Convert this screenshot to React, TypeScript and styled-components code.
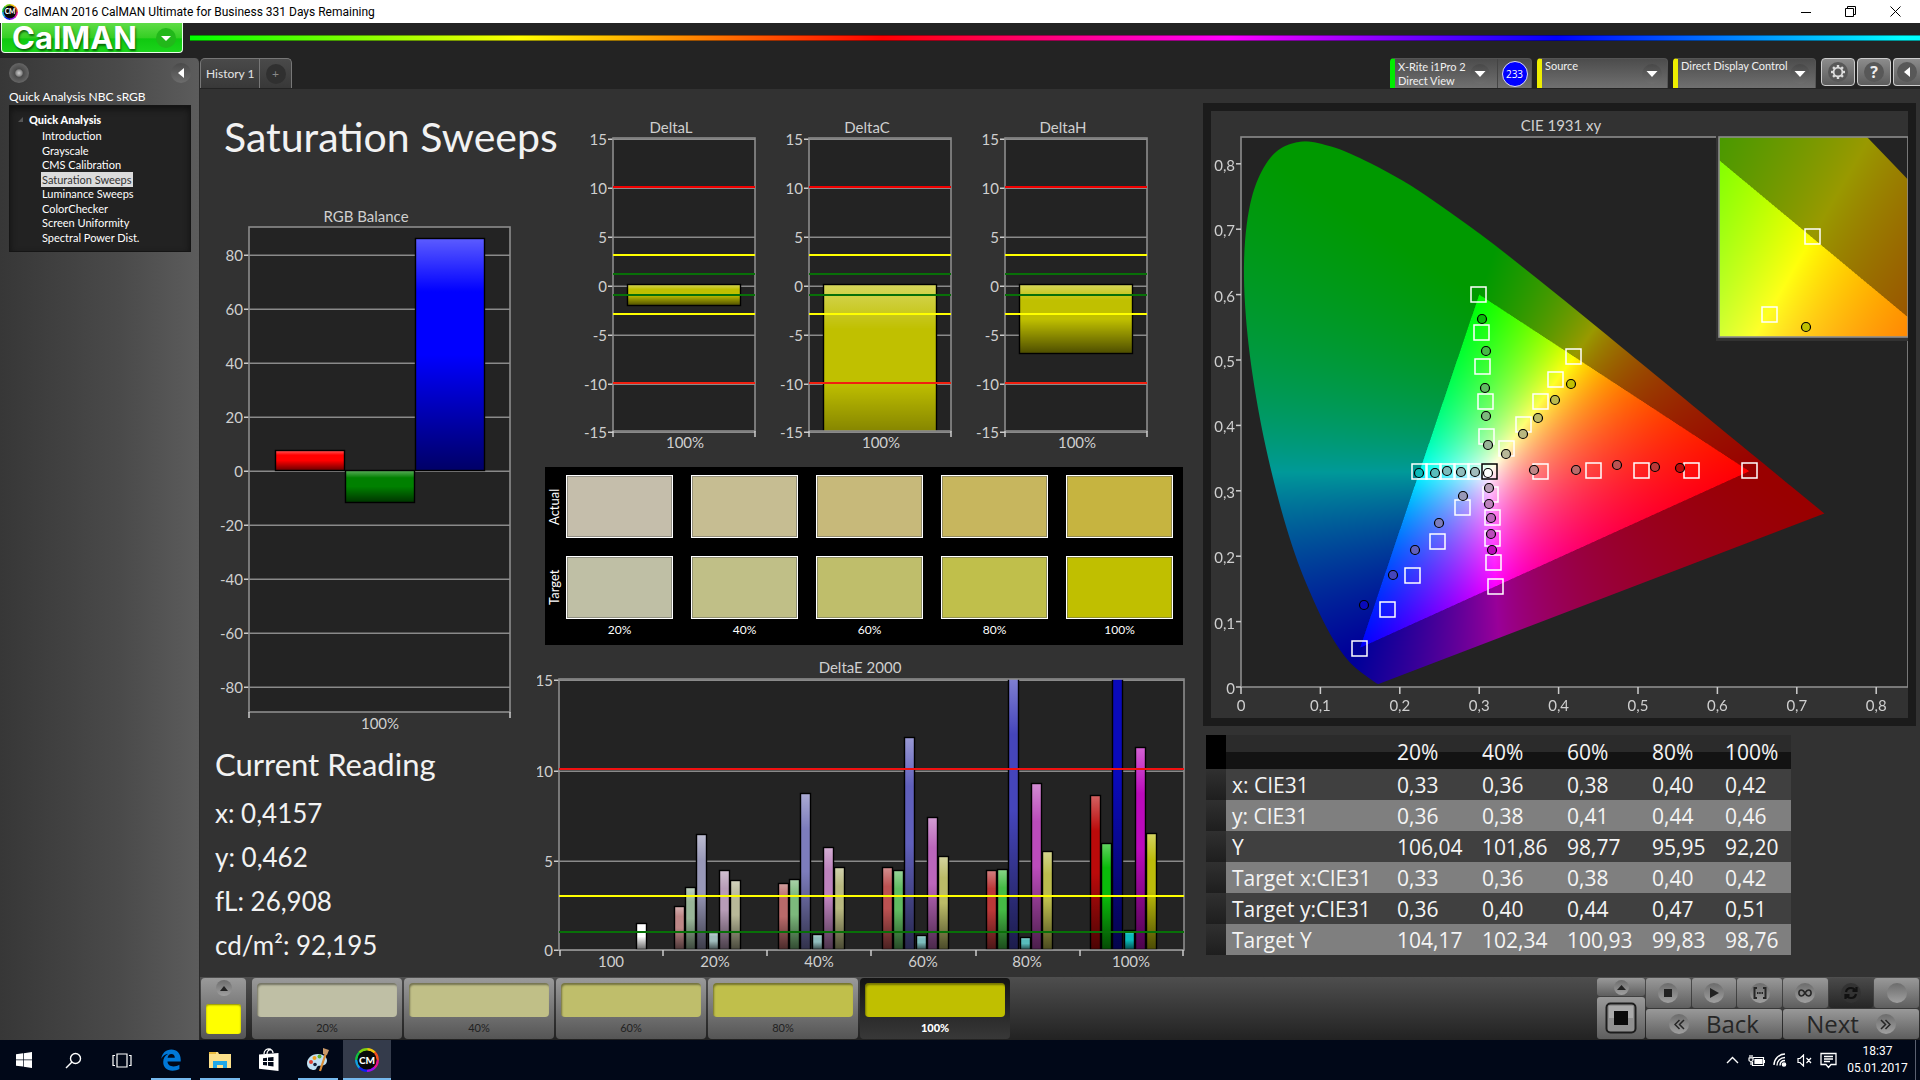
import React, { useEffect, useRef } from "react";
import styled, { createGlobalStyle, css } from "styled-components";

const UI = `Lato, "Open Sans", sans-serif`;
const SEGOE = `"Open Sans", "Noto Sans", sans-serif`;
const SYSTEM = `Roboto, "Open Sans", sans-serif`;

const GlobalStyle = createGlobalStyle`
  * { box-sizing: border-box; }
  body { margin: 0; background: #232323; font-family: ${UI}; color: #e8e8e8; }
  button, select { font-family: inherit; color: inherit; border: 0; margin: 0; padding: 0; }
`;

/* ---------- shell ---------- */

const Window = styled.div`
  display: flex;
  flex-direction: column;
  min-height: 100vh;
  background: #232323;
`;

const TitleBar = styled.header`
  display: flex;
  align-items: center;
  height: 23px;
  flex: none;
  background: #fff;
  color: #000;
  font: 12px/22px ${SYSTEM};
  padding-left: 2px;
  gap: 6px;
`;

const WindowTitle = styled.span`
  flex: 1;
  white-space: nowrap;
`;

const CaptionButtons = styled.div`
  display: flex;
  padding-right: 2px;
`;

const CaptionButton = styled.button`
  display: grid;
  place-items: center;
  width: 45px;
  height: 22px;
  background: transparent;
  color: #000;
`;

const Header = styled.div`
  display: flex;
  align-items: flex-start;
  flex: none;
  height: 35px;
  padding-left: 1px;
`;

const LogoButton = styled.button`
  display: flex;
  align-items: center;
  justify-content: space-between;
  width: 182px;
  height: 30px;
  padding: 0 6px 0 10px;
  background: linear-gradient(#5fdc46, #35cf24 50%, #10c810 55%, #1bd41b);
  border: 1px solid #e8ffe8;
  border-top: 0;
  border-radius: 0 0 4px 4px;
  color: #fff;
  font: 700 31px/29px Inter, ${UI};
  text-shadow: 1px 2px 2px rgba(0, 60, 0, 0.7);
`;

const Spectrum = styled.div`
  flex: 1;
  height: 6px;
  margin: 12px 0 0 7px;
  border-top: 1px solid rgba(0, 0, 0, 0.4);
  border-bottom: 1px solid rgba(0, 0, 0, 0.4);
  background: linear-gradient(to right, #0f0, #ff0 19%, #f00 40%, #f0f 60%, #00f 79%, #0ff 99%);
`;

const Body = styled.div`
  display: flex;
  flex: 1;
`;

/* ---------- sidebar ---------- */

const Sidebar = styled.aside`
  width: 200px;
  flex: none;
  padding: 5px 8px 0 9px;
  background: linear-gradient(to right, #373737, #4a4a4a 60%, #5c5c5c);
  border-radius: 0 5px 0 0;
  border-right: 1px solid #2a2a2a;
`;

const SidebarTop = styled.div`
  display: flex;
  justify-content: space-between;
`;

const RoundButton = styled.button<{ $glow?: boolean }>`
  display: grid;
  place-items: center;
  width: 20px;
  height: 20px;
  border-radius: 50%;
  color: #fff;
  background: ${(p) =>
    p.$glow
      ? "radial-gradient(circle, #ccc 0, #888 22%, #4a4a4a 30%, #666 70%)"
      : "linear-gradient(#4a4a4a, #6c6c6c)"};
`;

const WorkflowName = styled.h2`
  margin: 6px 0 0;
  font-size: 12px;
  line-height: 16px;
  font-weight: 400;
  color: #fff;
  white-space: nowrap;
`;

const Tree = styled.nav`
  height: 147px;
  padding: 6px 8px 0;
  background: #222;
  border: 1px solid #151515;
  box-shadow: inset 0 3px 6px #111;
`;

const TreeRoot = styled.div`
  display: flex;
  align-items: center;
  gap: 6px;
  font-size: 11px;
  line-height: 15px;
  font-weight: 900;
  color: #fff;
`;

const TreeList = styled.ul`
  list-style: none;
  margin: 1px 0 0 23px;
  padding: 0;
`;

const TreeItem = styled.li`
  height: 15px;
  line-height: 15px;
  font-size: 11px;
  &:nth-child(even) { height: 14px; }
`;

const TreeLink = styled.a<{ $active: boolean }>`
  display: inline-block;
  padding: 0 1px;
  color: ${(p) => (p.$active ? "#333" : "#fff")};
  background: ${(p) => (p.$active ? "#dcdcdc" : "transparent")};
  text-decoration: none;
  white-space: nowrap;
`;

/* ---------- tabs and devices ---------- */

const Main = styled.main`
  display: flex;
  flex-direction: column;
  flex: 1;
  min-width: 0;
`;

const Strip = styled.div`
  display: flex;
  justify-content: space-between;
  flex: none;
  height: 31px;
  padding-bottom: 1px;
  overflow: hidden;
`;

const Tabs = styled.div`
  display: flex;
  border: 1px solid #777;
  border-bottom: 0;
  border-radius: 5px 5px 0 0;
  background: linear-gradient(#4a4a4a, #383838);
`;

const Tab = styled.button`
  display: grid;
  place-items: center;
  padding: 0 5px;
  width: 58px;
  background: transparent;
  color: #e4e4e4;
  font-size: 12px;
  white-space: nowrap;
`;

const AddTab = styled(Tab)`
  width: 32px;
  border-left: 1px solid #777;
`;

const PlusDisc = styled.span`
  display: grid;
  place-items: center;
  width: 20px;
  height: 20px;
  border-radius: 50%;
  background: #303030;
  color: #888;
  line-height: 20px;
`;

const Devices = styled.div`
  display: flex;
  flex: none;
`;

const Device = styled.div<{ $bar: string; $width: number }>`
  display: flex;
  width: ${(p) => p.$width}px;
  margin-right: 5px;
  border: 1px solid #555;
  border-bottom: 0;
  border-left: 5px solid ${(p) => p.$bar};
  border-radius: 4px 4px 0 0;
  background: linear-gradient(#4c4c4c, #707070);
  color: #f0f0f0;
`;

const DeviceMenu = styled.button`
  display: flex;
  flex: 1;
  align-items: center;
  justify-content: space-between;
  padding: 0 7px 0 3px;
  background: transparent;
  font-size: 11px;
  line-height: 14px;
  text-align: left;
  white-space: nowrap;
`;

const SelectWrap = styled.label`
  display: grid;
  flex: 1;
  align-items: center;
  > * { grid-area: 1 / 1; }
`;

const DeviceSelect = styled.select`
  appearance: none;
  width: 100%;
  height: 100%;
  padding: 0 20px 15px 3px;
  background: transparent;
  font-size: 11px;
  line-height: 14px;
`;

const ArrowWell = styled.span`
  display: grid;
  place-items: center;
  justify-self: end;
  width: 20px;
  height: 20px;
  border-radius: 50%;
  background: linear-gradient(#484848, #6e6e6e);
  pointer-events: none;
`;

const SelectArrow = styled(ArrowWell)`
  margin-right: 5px;
`;

const Badge = styled.span`
  display: grid;
  place-items: center;
  width: 34px;
  border-left: 1px solid #444;
`;

const BadgeDisc = styled.span`
  width: 26px;
  height: 26px;
  border: 1px solid #dde;
  border-radius: 50%;
  background: #00f;
  color: #fff;
  font: 10px/24px ${SEGOE};
  text-align: center;
`;

const ToolButton = styled.button<{ $cut?: boolean }>`
  display: grid;
  place-items: center;
  width: ${(p) => (p.$cut ? 27 : 34)}px;
  height: 28px;
  margin-right: ${(p) => (p.$cut ? 0 : 2)}px;
  border: 1px solid #ccc;
  border-right-width: ${(p) => (p.$cut ? 0 : 1)}px;
  border-radius: ${(p) => (p.$cut ? "4px 0 0 4px" : "4px")};
  background: linear-gradient(#8c8c8c, #5c5c5c);
  color: #eee;
`;

const ToolDisc = styled.span`
  display: grid;
  place-items: center;
  width: 20px;
  height: 20px;
  border-radius: 50%;
  background: #585858;
  font: 700 16px/20px ${SEGOE};
`;

/* ---------- page ---------- */

const Page = styled.section`
  display: grid;
  grid-template-columns: 337fr 655fr 728fr;
  flex: 1;
  background: #323232;
`;

const Column = styled.div`
  display: flex;
  flex-direction: column;
  min-width: 0;
`;

const PageTitle = styled.h1`
  margin: 24px 0 39px;
  padding-left: 24px;
  font-size: 41px;
  line-height: 48px;
  font-weight: 400;
  color: #f2f2f2;
  white-space: nowrap;
`;

const Drawing = styled.svg`
  display: block;
  width: 100%;
  height: auto;
  font-family: ${UI};
`;

const Reading = styled.section`
  padding: 8px 0 0 15px;
  color: #f2f2f2;
`;

const ReadingTitle = styled.h2`
  margin: 0 0 9px;
  font-size: 31px;
  line-height: 36px;
  font-weight: 400;
`;

const ReadingLine = styled.p`
  margin: 0;
  font-size: 26px;
  line-height: 44px;
`;

const DeltaRow = styled.div`
  display: grid;
  grid-template-columns: repeat(3, 1fr);
  padding: 20px 33px 0 34px;
`;

const SwatchPanel = styled.div`
  display: grid;
  grid-template-columns: 3px repeat(5, 1fr);
  column-gap: 18px;
  grid-template-rows: 63px 63px 18px;
  row-gap: 18px;
  height: 178px;
  margin: 11px 9px 0 8px;
  padding: 8px 10px 0 0;
  background: #000;
`;

const SideLabel = styled.span`
  justify-self: start;
  width: 18px;
  writing-mode: vertical-rl;
  transform: rotate(180deg);
  text-align: center;
  color: #fff;
  font-size: 13px;
  line-height: 18px;
`;

const Swatch = styled.div<{ $color: string }>`
  background: ${(p) => p.$color};
  border: 1px solid #fff;
  box-shadow: inset 0 0 0 1px rgba(100, 100, 100, 0.5);
`;

const SwatchLabel = styled.span`
  margin-top: -15px;
  text-align: center;
  color: #fff;
  font-size: 12px;
  line-height: 16px;
`;

const DeltaEWrap = styled.div`
  margin-top: 10px;
`;

const CieFrame = styled.div`
  margin: 14px 4px 0 11px;
  border: 8px solid #1b1b1b;
  background: #323232;
`;

const Table = styled.table`
  width: 585px;
  margin: 9px 0 0 14px;
  border-collapse: collapse;
  table-layout: fixed;
  font: 21px/30px ${SEGOE};
  color: #f4f4f4;
`;

const HeadRow = styled.tr`
  height: 34px;
  background: linear-gradient(#2b2b2b 50%, #131313 50%);
`;

const DataRow = styled.tr`
  height: 31px;
  &:nth-child(odd) { background: #404040; }
  &:nth-child(even) { background: #7f7f7f; }
`;

const Grip = styled.td<{ $head?: boolean }>`
  padding: 0;
  background: ${(p) => (p.$head ? "#000" : "linear-gradient(#303030, #1e1e1e)")};
`;

const cell = css`
  padding: 0;
  font-weight: 400;
  text-align: left;
  white-space: nowrap;
`;
const HeadCell = styled.th`${cell}`;
const RowName = styled.th`${cell} padding-left: 6px;`;
const Cell = styled.td`${cell}`;

/* ---------- bottom bar ---------- */

const BottomBar = styled.div`
  display: flex;
  justify-content: space-between;
  flex: none;
  height: 63px;
  padding: 1px;
  background: linear-gradient(#4e4e4e, #222);
`;

const Levels = styled.div`
  display: flex;
  gap: 2px;
`;

const metal = css`
  background: linear-gradient(#9a9a9a, #555);
`;

const CurrentColor = styled.div`
  display: flex;
  flex-direction: column;
  align-items: center;
  justify-content: space-between;
  width: 45px;
  margin-right: 4px;
  padding: 2px 0 5px;
  border-radius: 4px;
  ${metal}
`;

const YellowTile = styled.div`
  width: 35px;
  height: 30px;
  border-radius: 3px;
  background: #ff0;
  box-shadow: inset 0 1px 2px #880;
`;

const LevelButton = styled.button<{ $active: boolean }>`
  display: flex;
  flex-direction: column;
  width: 150px;
  padding: 5px 5px 0;
  border-radius: 4px;
  ${metal}
  ${(p) => p.$active && css`background: linear-gradient(#141414, #383838);`}
  color: ${(p) => (p.$active ? "#fff" : "#222")};
  font-size: 11px;
  font-weight: ${(p) => (p.$active ? 900 : 400)};
  line-height: 22px;
  text-align: center;
`;

const LevelColor = styled.span<{ $color: string }>`
  height: 36px;
  width: 100%;
  border-radius: 4px;
  background: ${(p) => p.$color};
  box-shadow: inset 1px 2px 2px rgba(0, 0, 0, 0.4);
`;

const LevelText = styled.span`
  width: 100%;
`;

const Transport = styled.div`
  display: grid;
  width: 322px;
  grid-template-columns: 48px repeat(6, 1fr);
  grid-template-rows: 30px 30px;
  gap: 1px;
`;

const PatternBox = styled.div`
  grid-row: 1 / 3;
  display: grid;
  grid-template-rows: 18px 1fr;
  gap: 1px;
`;

const MetalButton = styled.button<{ $dark?: boolean; $span?: number }>`
  display: flex;
  align-items: center;
  justify-content: center;
  gap: 17px;
  grid-column: span ${(p) => p.$span ?? 1};
  border-radius: 3px;
  background: ${(p) => (p.$dark ? "linear-gradient(#4a4a4a, #262626)" : "linear-gradient(#999, #5e5e5e)")};
  color: #262626;
  font: 500 24px/30px ${SEGOE};
`;

const MetalDisc = styled.span<{ $size?: number; $dark?: boolean }>`
  display: grid;
  place-items: center;
  width: ${(p) => p.$size ?? 20}px;
  height: ${(p) => p.$size ?? 20}px;
  border-radius: 50%;
  background: ${(p) => (p.$dark ? "#333" : "linear-gradient(#6c6c6c, #a0a0a0)")};
`;

/* ---------- taskbar ---------- */

const Taskbar = styled.footer`
  display: flex;
  justify-content: space-between;
  flex: none;
  height: 40px;
  background: #010818;
  color: #fff;
`;

const Apps = styled.div`
  display: flex;
  gap: 1px;
`;

const AppButton = styled.button<{ $open?: boolean; $active?: boolean }>`
  display: grid;
  place-items: center;
  width: 48px;
  height: 40px;
  background-color: ${(p) => (p.$active ? "#343b4b" : "transparent")};
  background-image: ${(p) => (p.$open ? "linear-gradient(#76b9ed, #76b9ed)" : "none")};
  background-repeat: no-repeat;
  background-position: center bottom;
  background-size: ${(p) => (p.$active ? "48px 2px" : "40px 2px")};
`;

const Tray = styled.div`
  display: flex;
  align-items: center;
  padding-right: 4px;
`;

const TrayButton = styled.button`
  display: grid;
  place-items: center;
  width: 24px;
  height: 40px;
  background: transparent;
`;

const Clock = styled.div`
  width: 76px;
  height: 40px;
  padding-top: 3px;
  border-right: 1px solid #5a6070;
  font: 12px/17px ${SYSTEM};
  text-align: center;
`;

/* ---------- small drawings ---------- */

const Down = () => (
  <svg width="12" height="6" viewBox="0 0 12 6" aria-hidden><path d="M0.5 0h11L6 6z" fill="#fff" /></svg>
);

const Left = () => (
  <svg width="6" height="10" aria-hidden><path d="M6 0v10L0 5z" fill="#fff" /></svg>
);

const CmLogo = ({ size }: { size: number }) => (
  <svg width={size} height={size} viewBox="0 0 24 24" aria-hidden>
    <g fill="none" strokeWidth="2.6">
      {["#f2c40c", "#f5501e", "#e8108c", "#9a10f0", "#1020f0", "#10a0e0", "#10c040", "#80d010"].map((c, i) => {
        const a = ((i * 45 - 90) * Math.PI) / 180;
        const b = ((i * 45 - 42) * Math.PI) / 180;
        return (
          <path key={c} stroke={c} d={`M${12 + 10.6 * Math.cos(a)} ${12 + 10.6 * Math.sin(a)}A10.6 10.6 0 0 1 ${12 + 10.6 * Math.cos(b)} ${12 + 10.6 * Math.sin(b)}`} />
        );
      })}
    </g>
    <circle cx="12" cy="12" r="9.6" fill="#080808" />
    <text x="12" y="15.6" textAnchor="middle" fontFamily="Lato, sans-serif" fontWeight="900" fontSize="10" fill="#fff">CM</text>
  </svg>
);

const Gear = () => (
  <svg width="16" height="16" viewBox="0 0 16 16" fill="none" stroke="#ddd" aria-hidden>
    <circle cx="8" cy="8" r="4.4" strokeWidth="1.8" />
    {[0, 45, 90, 135, 180, 225, 270, 315].map((r) => (
      <path key={r} d="M8 3.4V1" strokeWidth="2.4" transform={`rotate(${r} 8 8)`} />
    ))}
  </svg>
);

/* ---------- bar charts ---------- */

type Bar = { x: number; w: number; top: number; bottom: number; color: string };
type Mark = { at: number; text: string };

type ChartProps = {
  id: string;
  view: [number, number, number, number];
  plot: [number, number, number, number];
  title: string;
  titleX: number;
  titleY: number;
  marks: Mark[];
  ticks: number[];
  labels: Mark[];
  bars: Bar[];
  limits?: { at: number; color: string }[];
};

const BarChart = ({ id, view, plot, title, titleX, titleY, marks, ticks, labels, bars, limits = [] }: ChartProps) => {
  const [l, t, r, b] = plot;
  return (
    <Drawing viewBox={view.join(" ")} role="img" aria-label={title} fill="#cfcfcf" fontSize="15">
      <defs>
        <linearGradient id={`${id}-shade`} x1="0" y1="0" x2="0" y2="1">
          <stop offset="0" stopColor="#fff" stopOpacity="0.36" />
          <stop offset="0.23" stopColor="#fff" stopOpacity="0" />
          <stop offset="0.5" stopColor="#000" stopOpacity="0" />
          <stop offset="1" stopColor="#000" stopOpacity="0.6" />
        </linearGradient>
        <clipPath id={`${id}-clip`}><rect x={l} y={t} width={r - l} height={b - t} /></clipPath>
      </defs>
      <text x={titleX} y={titleY} textAnchor="middle">{title}</text>
      <rect x={l} y={t} width={r - l} height={b - t} fill="#232323" />
      {marks.map((m) => (
        <g key={m.text}>
          <rect x={l} y={m.at - 1} width={r - l} height="1" fill="#555" />
          <rect x={l} y={m.at} width={r - l} height="1" fill="#8a8a8a" />
          <rect x={l - 5} y={m.at - 0.5} width="5" height="1.5" fill="#ccc" />
          <text x={l - 6} y={m.at + 6} textAnchor="end">{m.text}</text>
        </g>
      ))}
      <g clipPath={`url(#${id}-clip)`}>
        {bars.map((v, i) => (
          <g key={i}>
            <rect x={v.x} y={v.top} width={v.w} height={v.bottom - v.top} fill={v.color} />
            <rect x={v.x + 0.5} y={v.top + 0.5} width={v.w - 1} height={v.bottom - v.top - 1} fill={`url(#${id}-shade)`} stroke="#000" strokeWidth="1.4" />
          </g>
        ))}
      </g>
      <rect x={l} y={t} width={r - l} height={b - t} fill="none" stroke="#8c8c8c" strokeWidth="1.6" />
      {limits.map((m) => (
        <rect key={m.at} x={l} y={m.at - 1} width={r - l} height="2" fill={m.color} />
      ))}
      {ticks.map((x) => <rect key={x} x={x - 0.75} y={b} width="1.5" height="6" fill="#ccc" />)}
      {labels.map((m) => (
        <text key={m.text} x={m.at} y={b + 17} textAnchor="middle">{m.text}</text>
      ))}
    </Drawing>
  );
};

const RgbBalance = () => (
  <BarChart
    id="rgb"
    view={[200, 200, 337, 538]}
    plot={[249, 227, 510, 712]}
    title="RGB Balance"
    titleX={366}
    titleY={222}
    marks={[80, 60, 40, 20, 0, -20, -40, -60, -80].map((v) => ({ at: Math.round(471 - v * 2.695), text: String(v) }))}
    ticks={[249, 510]}
    labels={[{ at: 380, text: "100%" }]}
    bars={[
      { x: 275, w: 70, top: 450, bottom: 471, color: "#f00" },
      { x: 345, w: 70, top: 470, bottom: 503, color: "#008000" },
      { x: 415, w: 70, top: 238, bottom: 471, color: "#00f" },
    ]}
  />
);

const DeltaChart = ({ name, offset, bottom }: { name: string; offset: number; bottom: number }) => (
  <BarChart
    id={name}
    view={[571 + offset, 109, 196, 347]}
    plot={[613 + offset, 138, 755 + offset, 431]}
    title={name}
    titleX={671 + offset}
    titleY={133}
    marks={[
      { at: 139, text: "15" }, { at: 188, text: "10" }, { at: 237, text: "5" }, { at: 286, text: "0" },
      { at: 335, text: "-5" }, { at: 384, text: "-10" }, { at: 432, text: "-15" },
    ]}
    ticks={[613 + offset, 755 + offset]}
    labels={[{ at: 685 + offset, text: "100%" }]}
    bars={[{ x: 627 + offset, w: 114, top: 284, bottom, color: "#c0c000" }]}
    limits={[
      { at: 187, color: "#f00000" }, { at: 255, color: "#ffff00" }, { at: 274, color: "#087008" },
      { at: 295, color: "#087008" }, { at: 314, color: "#ffff00" }, { at: 383, color: "#f02010" },
    ]}
  />
);

const deltaETops = [
  [906, 887, 834, 932, 870, 880],
  [883, 879, 793, 934, 847, 867],
  [867, 870, 737, 935, 817, 856],
  [870, 869, 670, 937, 783, 851],
  [795, 843, 600, 930, 747, 833],
];
const deltaEColors = [
  ["#bd8787", "#98b598", "#9898b8", "#a0bcbc", "#b79cb7", "#b8b898"],
  ["#b96a6a", "#7cb97c", "#7c7cbc", "#90bcbc", "#bd82bd", "#b8b880"],
  ["#bc5252", "#60bb60", "#6060bc", "#7cbcbc", "#bb66bb", "#bbbb68"],
  ["#bb3838", "#45bb45", "#4545bb", "#58bcbc", "#bb4cbb", "#bbbb4e"],
  ["#bb0a0a", "#0abb0a", "#0a0abb", "#0abbbb", "#bb0abb", "#bbbb0a"],
];

const DeltaE = () => (
  <BarChart
    id="de"
    view={[537, 655, 655, 320]}
    plot={[559, 679, 1184, 950]}
    title="DeltaE 2000"
    titleX={860}
    titleY={673}
    marks={[{ at: 680, text: "15" }, { at: 771, text: "10" }, { at: 861, text: "5" }, { at: 950, text: "0" }]}
    ticks={[560, 663, 767, 871, 976, 1080, 1183]}
    labels={["100", "20%", "40%", "60%", "80%", "100%"].map((text, i) => ({ at: 611 + i * 104, text }))}
    bars={[
      { x: 636, w: 11, top: 923, bottom: 950, color: "#fff" },
      ...deltaETops.flatMap((tops, g) =>
        tops.map((top, i) => ({ x: 674 + g * 104 + Math.round(i * 11.2), w: 11, top, bottom: 950, color: deltaEColors[g][i] }))
      ),
    ]}
    limits={[{ at: 769, color: "#f01010" }, { at: 896, color: "#ffff00" }, { at: 932, color: "#087008" }]}
  />
);

/* ---------- chromaticity diagram ---------- */

const locus: [number, number][] = [
  [0.1741, 0.005], [0.1714, 0.0051], [0.1644, 0.0109], [0.1566, 0.0177], [0.144, 0.0297], [0.1355, 0.0399],
  [0.1241, 0.0578], [0.1096, 0.0868], [0.0913, 0.1327], [0.0687, 0.2007], [0.0454, 0.295], [0.0235, 0.4127],
  [0.0082, 0.5384], [0.0039, 0.6548], [0.0139, 0.7502], [0.0389, 0.812], [0.0743, 0.8338], [0.1142, 0.8262],
  [0.1547, 0.8059], [0.1929, 0.7816], [0.2296, 0.7543], [0.3016, 0.6923], [0.3731, 0.6245], [0.4441, 0.5547],
  [0.5125, 0.4866], [0.5752, 0.4242], [0.627, 0.3725], [0.6658, 0.334], [0.6915, 0.3083], [0.7347, 0.2653],
];

type GamutProps = { x: number; y: number; width: number; height: number; x0: number; x1: number; y0: number; y1: number };

const Plane = styled.canvas`
  display: block;
  width: 100%;
  height: 100%;
`;

/* Paints the visible gamut: full brightness inside sRGB, 60 % outside it. */
const Gamut = ({ x, y, width, height, x0, x1, y0, y1 }: GamutProps) => {
  const ref = useRef<HTMLCanvasElement>(null);
  useEffect(() => {
    const canvas = ref.current;
    const ctx = canvas?.getContext("2d");
    if (!canvas || !ctx) return;
    const w = (canvas.width = width * 2);
    const h = (canvas.height = height * 2);
    const layer = document.createElement("canvas");
    layer.width = w;
    layer.height = h;
    const lctx = layer.getContext("2d");
    if (!lctx) return;
    const img = lctx.createImageData(w, h);
    for (let j = 0; j < h; j++) {
      const cy = y1 - ((j + 0.5) / h) * (y1 - y0);
      for (let i = 0; i < w; i++) {
        const cx = x0 + ((i + 0.5) / w) * (x1 - x0);
        const X = cx / cy;
        const Z = (1 - cx - cy) / cy;
        const r = 3.2406 * X - 1.5372 - 0.4986 * Z;
        const g = -0.9689 * X + 1.8758 + 0.0415 * Z;
        const b = 0.0557 * X - 0.204 + 1.057 * Z;
        const k = (Math.min(r, g, b) < 0 ? 153 : 255) / Math.max(r, g, b);
        const o = (j * w + i) * 4;
        img.data[o] = Math.max(0, r * k);
        img.data[o + 1] = Math.max(0, g * k);
        img.data[o + 2] = Math.max(0, b * k);
        img.data[o + 3] = 255;
      }
    }
    lctx.putImageData(img, 0, 0);
    const pts = locus.map(([a, c]) => [((a - x0) / (x1 - x0)) * w, ((y1 - c) / (y1 - y0)) * h]);
    ctx.beginPath();
    ctx.moveTo(pts[0][0], pts[0][1]);
    for (let i = 0; i < pts.length - 1; i++) {
      const p0 = pts[Math.max(0, i - 1)];
      const p1 = pts[i];
      const p2 = pts[i + 1];
      const p3 = pts[Math.min(pts.length - 1, i + 2)];
      ctx.bezierCurveTo(
        p1[0] + (p2[0] - p0[0]) / 6, p1[1] + (p2[1] - p0[1]) / 6,
        p2[0] - (p3[0] - p1[0]) / 6, p2[1] - (p3[1] - p1[1]) / 6,
        p2[0], p2[1]
      );
    }
    ctx.closePath();
    ctx.clip();
    ctx.drawImage(layer, 0, 0);
  }, [width, height, x0, x1, y0, y1]);
  return (
    <foreignObject x={x} y={y} width={width} height={height}>
      <Plane ref={ref} />
    </foreignObject>
  );
};

const targets: [number, number][] = [
  [1478, 294], [1481, 332], [1482, 366], [1485, 401], [1486, 436],
  [1573, 356], [1555, 379], [1540, 401], [1523, 424], [1506, 448],
  [1419, 471], [1433, 471], [1447, 471], [1461, 471], [1475, 471],
  [1540, 471], [1593, 470], [1641, 470], [1691, 470], [1749, 470],
  [1462, 507], [1437, 541], [1412, 575], [1387, 609], [1359, 648],
  [1490, 494], [1492, 517], [1492, 538], [1493, 562], [1495, 586],
];

const readings: [number, number, string][] = [
  [1482, 319, "#0abb0a"], [1486, 351, "#45bb45"], [1485, 388, "#60bb60"], [1486, 416, "#7cb97c"], [1488, 445, "#98b598"],
  [1571, 384, "#c0c000"], [1555, 400, "#bbbb4e"], [1538, 418, "#bbbb68"], [1523, 434, "#b8b880"], [1506, 454, "#b8b898"],
  [1419, 473, "#0abbbb"], [1435, 473, "#58bcbc"], [1447, 471, "#7cbcbc"], [1461, 472, "#90bcbc"], [1475, 472, "#a0bcbc"],
  [1534, 470, "#bd8787"], [1576, 470, "#b96a6a"], [1617, 465, "#bc5252"], [1655, 467, "#bb3838"], [1680, 468, "#bb0a0a"],
  [1463, 496, "#9898b8"], [1439, 523, "#7c7cbc"], [1415, 550, "#6060bc"], [1393, 575, "#4545bb"], [1364, 605, "#0a0abb"],
  [1489, 488, "#b79cb7"], [1489, 504, "#bd82bd"], [1491, 518, "#bb66bb"], [1491, 534, "#bb4cbb"], [1492, 550, "#bb0abb"],
];

const Target = ({ x, y, color = "#fff" }: { x: number; y: number; color?: string }) => (
  <rect x={x - 7} y={y - 7} width="15" height="15" fill="none" stroke={color} strokeWidth="1.5" />
);
const Dot = ({ x, y, color }: { x: number; y: number; color: string }) => (
  <circle cx={x} cy={y} r="4.5" fill={color} stroke="#000" strokeWidth="1.2" />
);

const Cie = () => (
  <Drawing viewBox="1211 111 697 607" role="img" aria-label="CIE 1931 xy" fill="#cfcfcf" fontSize="15">
    <text x="1561" y="131" textAnchor="middle">CIE 1931 xy</text>
    <rect x="1241" y="137" width="667" height="550" fill="#232323" />
    <Gamut x={1241} y={137} width={667} height={550} x0={0} x1={0.84} y0={0} y1={0.841} />
    <rect x="1241" y="137" width="667" height="550" fill="none" stroke="#8c8c8c" strokeWidth="1.6" />
    {[0, 1, 2, 3, 4, 5, 6, 7, 8].map((i) => {
      const text = i === 0 ? "0" : `0,${i}`;
      const tx = 1241 + i * 79.4;
      const ty = 687 - i * 65.4;
      return (
        <g key={i}>
          <rect x={1236} y={ty - 0.75} width="5" height="1.5" fill="#ccc" />
          <text x={1235} y={ty + 7} textAnchor="end">{text}</text>
          <rect x={tx - 0.75} y={687} width="1.5" height="7" fill="#ccc" />
          <text x={tx} y={711} textAnchor="middle">{text}</text>
        </g>
      );
    })}
    {targets.map(([x, y]) => <Target key={`${x}-${y}`} x={x} y={y} />)}
    {readings.map(([x, y, c]) => <Dot key={`${x}-${y}`} x={x} y={y} color={c} />)}
    <Target x={1489} y={471} color="#000" />
    <Dot x={1488} y={473} color="#fff" />
    <rect x="1716" y="136" width="193" height="205" fill="#323232" />
    <rect x="1719" y="137" width="189" height="200" fill="#232323" />
    <Gamut x={1719} y={137} width={189} height={200} x0={0.3735} x1={0.4665} y0={0.4585} y1={0.5525} />
    <rect x="1719" y="137" width="189" height="200" fill="none" stroke="#8c8c8c" strokeWidth="1.6" />
    <Target x={1812} y={236} />
    <Target x={1769} y={314} />
    <Dot x={1806} y={327} color="#c0c000" />
  </Drawing>
);

/* ---------- data ---------- */

const pages = ["Introduction", "Grayscale", "CMS Calibration", "Saturation Sweeps", "Luminance Sweeps", "ColorChecker", "Screen Uniformity", "Spectral Power Dist."];
const levels = ["20%", "40%", "60%", "80%", "100%"];
const actual = ["#c5beab", "#c6bd92", "#c7b97a", "#c7b65e", "#c6b440"];
const target = ["#bfbfa5", "#c0bf87", "#bfbe6b", "#c0bf4b", "#c0bf00"];
const rows = [
  ["x: CIE31", "0,33", "0,36", "0,38", "0,40", "0,42"],
  ["y: CIE31", "0,36", "0,38", "0,41", "0,44", "0,46"],
  ["Y", "106,04", "101,86", "98,77", "95,95", "92,20"],
  ["Target x:CIE31", "0,33", "0,36", "0,38", "0,40", "0,42"],
  ["Target y:CIE31", "0,36", "0,40", "0,44", "0,47", "0,51"],
  ["Target Y", "104,17", "102,34", "100,93", "99,83", "98,76"],
];

const line = { fill: "none", stroke: "currentColor", "aria-hidden": true } as const;

export default function App() {
  return (
    <Window>
      <GlobalStyle />
      <TitleBar>
        <CmLogo size={16} />
        <WindowTitle>CalMAN 2016 CalMAN Ultimate for Business 331 Days Remaining</WindowTitle>
        <CaptionButtons>
          <CaptionButton aria-label="Minimize"><svg width="10" height="10" {...line}><path d="M0 5.5h10" /></svg></CaptionButton>
          <CaptionButton aria-label="Restore"><svg width="11" height="11" {...line}><path d="M0.5 2.5h8v8h-8zM2.5 2.5v-2h8v8h-2" /></svg></CaptionButton>
          <CaptionButton aria-label="Close"><svg width="11" height="11" {...line}><path d="M0.5 0.5l10 10M10.5 0.5l-10 10" /></svg></CaptionButton>
        </CaptionButtons>
      </TitleBar>
      <Header>
        <LogoButton aria-label="CalMAN menu">
          CalMAN
          <svg width="20" height="20" viewBox="0 0 20 20" aria-hidden><circle cx="10" cy="10" r="10" fill="#22b81a" /><path d="M5 8h10l-5 5z" fill="#fff" /></svg>
        </LogoButton>
        <Spectrum />
      </Header>
      <Body>
        <Sidebar>
          <SidebarTop>
            <RoundButton $glow aria-label="Workflow" />
            <RoundButton aria-label="Collapse sidebar"><Left /></RoundButton>
          </SidebarTop>
          <WorkflowName>Quick Analysis NBC sRGB</WorkflowName>
          <Tree>
            <TreeRoot><svg width="5" height="5" aria-hidden><path d="M5 0v5H0z" fill="#555" /></svg>Quick Analysis</TreeRoot>
            <TreeList>
              {pages.map((p) => (
                <TreeItem key={p}><TreeLink href="#" $active={p === "Saturation Sweeps"}>{p}</TreeLink></TreeItem>
              ))}
            </TreeList>
          </Tree>
        </Sidebar>
        <Main>
          <Strip>
            <Tabs>
              <Tab>History 1</Tab>
              <AddTab aria-label="Add history"><PlusDisc>+</PlusDisc></AddTab>
            </Tabs>
            <Devices>
              <Device $bar="#0e0" $width={142}>
                <DeviceMenu aria-haspopup="menu"><span>X-Rite i1Pro 2<br />Direct View</span><ArrowWell><Down /></ArrowWell></DeviceMenu>
                <Badge><BadgeDisc>233</BadgeDisc></Badge>
              </Device>
              <Device $bar="#ee0" $width={131}>
                <SelectWrap><DeviceSelect aria-label="Source"><option>Source</option></DeviceSelect><SelectArrow><Down /></SelectArrow></SelectWrap>
              </Device>
              <Device $bar="#ee0" $width={143}>
                <SelectWrap><DeviceSelect aria-label="Display control"><option>Direct Display Control</option></DeviceSelect><SelectArrow><Down /></SelectArrow></SelectWrap>
              </Device>
              <ToolButton aria-label="Settings"><ToolDisc><Gear /></ToolDisc></ToolButton>
              <ToolButton aria-label="Help"><ToolDisc>?</ToolDisc></ToolButton>
              <ToolButton $cut aria-label="Collapse"><ToolDisc><Left /></ToolDisc></ToolButton>
            </Devices>
          </Strip>
          <Page>
            <Column>
              <PageTitle>Saturation Sweeps</PageTitle>
              <RgbBalance />
              <Reading>
                <ReadingTitle>Current Reading</ReadingTitle>
                <ReadingLine>x: 0,4157</ReadingLine>
                <ReadingLine>y: 0,462</ReadingLine>
                <ReadingLine>fL: 26,908</ReadingLine>
                <ReadingLine>cd/m²: 92,195</ReadingLine>
              </Reading>
            </Column>
            <Column>
              <DeltaRow>
                <DeltaChart name="DeltaL" offset={0} bottom={306} />
                <DeltaChart name="DeltaC" offset={196} bottom={480} />
                <DeltaChart name="DeltaH" offset={392} bottom={354} />
              </DeltaRow>
              <SwatchPanel>
                <SideLabel>Actual</SideLabel>
                {actual.map((c) => <Swatch key={c} $color={c} />)}
                <SideLabel>Target</SideLabel>
                {target.map((c) => <Swatch key={c} $color={c} />)}
                <span />
                {levels.map((l) => <SwatchLabel key={l}>{l}</SwatchLabel>)}
              </SwatchPanel>
              <DeltaEWrap><DeltaE /></DeltaEWrap>
            </Column>
            <Column>
              <CieFrame><Cie /></CieFrame>
              <Table>
                <colgroup>
                  {[20, 171, 85, 85, 85, 73, 66].map((w, i) => <col key={i} width={w} />)}
                </colgroup>
                <thead>
                  <HeadRow>
                    <Grip $head />
                    <HeadCell />
                    {levels.map((l) => <HeadCell key={l} scope="col">{l}</HeadCell>)}
                  </HeadRow>
                </thead>
                <tbody>
                  {rows.map(([name, ...values]) => (
                    <DataRow key={name}>
                      <Grip />
                      <RowName scope="row">{name}</RowName>
                      {values.map((v, i) => <Cell key={i}>{v}</Cell>)}
                    </DataRow>
                  ))}
                </tbody>
              </Table>
            </Column>
          </Page>
          <BottomBar>
            <Levels>
              <CurrentColor>
                <MetalDisc $size={16}><svg width="8" height="5" aria-hidden><path d="M0 5h8L4 0z" fill="#222" /></svg></MetalDisc>
                <YellowTile />
              </CurrentColor>
              {levels.map((l, i) => (
                <LevelButton key={l} $active={i === 4}>
                  <LevelColor $color={target[i]} />
                  <LevelText>{l}</LevelText>
                </LevelButton>
              ))}
            </Levels>
            <Transport>
              <PatternBox>
                <MetalButton aria-label="Expand"><MetalDisc $size={15}><svg width="9" height="5" aria-hidden><path d="M0 5h9L4.5 0z" fill="#222" /></svg></MetalDisc></MetalButton>
                <MetalButton aria-label="Pattern window">
                  <svg width="32" height="32" aria-hidden>
                    <rect x="1.5" y="1.5" width="29" height="29" rx="4" fill="#909090" stroke="#1c1c1c" strokeWidth="2" />
                    <path d="M4 4h24v12H4z" fill="#aaa" />
                    <rect x="9" y="9" width="14" height="14" fill="#0a0a0a" />
                  </svg>
                </MetalButton>
              </PatternBox>
              <MetalButton aria-label="Stop"><MetalDisc><svg width="8" height="8" aria-hidden><path d="M0 0h8v8H0z" fill="#222" /></svg></MetalDisc></MetalButton>
              <MetalButton aria-label="Read"><MetalDisc><svg width="10" height="10" aria-hidden><path d="M1 0l9 5-9 5z" fill="#222" /></svg></MetalDisc></MetalButton>
              <MetalButton aria-label="Read series"><MetalDisc><svg width="14" height="12" {...line} strokeWidth="2"><path d="M4 1H1.5v10H4M10 1h2.5v10H10" /><path d="M4 6h1.5M6.2 6h1.5M8.5 6h1.5" /></svg></MetalDisc></MetalButton>
              <MetalButton aria-label="Read continuously"><MetalDisc><svg width="14" height="8" {...line} strokeWidth="1.6"><path d="M7 4C5.500 1.500 4.500 1 3.500 1a2.600 3 0 0 0 0 6C4.500 7 5.500 6.500 7 4S9.500 1 10.500 1a2.600 3 0 0 1 0 6C9.500 7 8.500 6.500 7 4z" /></svg></MetalDisc></MetalButton>
              <MetalButton $dark aria-label="Repeat"><MetalDisc $dark><svg width="14" height="14" fill="none" stroke="#111" strokeWidth="2.2" aria-hidden><path d="M2 6C2.5 3 5 2 7 2c2 0 3 .7 4 2M12.5 1v4h-4M12 8c-.5 3-3 4-5 4-2 0-3-.7-4-2M1.5 13V9h4" /></svg></MetalDisc></MetalButton>
              <MetalButton aria-label="Status"><MetalDisc /></MetalButton>
              <MetalButton $span={3}><MetalDisc><svg width="11" height="11" {...line} strokeWidth="1.5"><path d="M5.5 1L1 5.5 5.5 10M10 1L5.5 5.5 10 10" /></svg></MetalDisc>Back</MetalButton>
              <MetalButton $span={3}>Next<MetalDisc><svg width="11" height="11" {...line} strokeWidth="1.5"><path d="M5.5 1L10 5.5 5.5 10M1 1l4.5 4.5L1 10" /></svg></MetalDisc></MetalButton>
            </Transport>
          </BottomBar>
        </Main>
      </Body>
      <Taskbar>
        <Apps>
          <AppButton aria-label="Start"><svg width="16" height="16" aria-hidden fill="#fff"><path d="M0 2.3L7 1.3V7.6H0zM7.7 1.2L16 0V7.6H7.7zM0 8.3H7v6.3L0 13.7zM7.7 8.3H16V16L7.7 14.8z" /></svg></AppButton>
          <AppButton aria-label="Search"><svg width="17" height="17" {...line} strokeWidth="1.4"><circle cx="10.5" cy="6.5" r="5" /><path d="M7 10l-6 6" /></svg></AppButton>
          <AppButton aria-label="Task view"><svg width="20" height="15" {...line} strokeWidth="1.2"><path d="M5 1h10v13H5zM3 2.5H1v10h2M17 2.5h2v10h-2" /></svg></AppButton>
          <AppButton $open aria-label="Edge">
            <svg width="20" height="22" viewBox="0 0 20 22" aria-hidden><path d="M0.300 9.800C1 4.200 4.800 0.500 10.300 0.500c5.700 0 9.400 4 9.400 10v2.100H6.500c.2 3.300 2.700 4.800 6 4.800 2.200 0 4-.6 5.900-1.700v4.400c-2 1.100-4.300 1.600-6.900 1.600C5.700 21.700 2.200 18.300 2.200 13c0-3.700 2-6.700 5-8.200C4.300 5 1.800 6.800.3 9.800zM6.600 8.800h7.200c0-2.400-1.200-3.800-3.400-3.800-2.100 0-3.400 1.500-3.800 3.800z" fill="#0078d7" /></svg>
          </AppButton>
          <AppButton $open aria-label="File Explorer">
            <svg width="22" height="18" viewBox="0 0 22 18" aria-hidden><path d="M0 1h9l1 2h12v14H0z" fill="#fbe08a" /><path d="M0 1h7v2H0z" fill="#e8b93c" /><path d="M4 17v-7h14v7h-4v-3H8v3z" fill="#1fa8e8" /></svg>
          </AppButton>
          <AppButton aria-label="Store">
            <svg width="22" height="24" viewBox="0 0 22 24" aria-hidden><path d="M6 6C6 2 9 .8 11 .8S15 3 15 5M9 6c0-3 2-4.500 4-4.500" fill="none" stroke="#fff" strokeWidth="1.3" /><path d="M1 6.500L20.500 5v18L1 20.800z" fill="#fff" /><path d="M5 10.200l4-.5V13H5zM10 9.600l5.500-.6v4H10zM5 14h4v3.600l-4-.5zM10 14h5.500v4.400l-5.500-.7z" fill="#010818" /></svg>
          </AppButton>
          <AppButton $open aria-label="Paint">
            <svg width="24" height="24" viewBox="0 0 24 24" aria-hidden><path d="M12 6C5 6 1 11 1 15.500S5 22 8 22c3 0 2-3 4-4s8 1 9-5c.4-4-4-7-9-7z" fill="#bfe0f2" /><circle cx="5" cy="14" r="2" fill="#e04030" /><circle cx="8.5" cy="10" r="2" fill="#f0a020" /><circle cx="13.5" cy="8.5" r="2" fill="#60b030" /><circle cx="9" cy="16.5" r="1.8" fill="#10203a" /><path d="M20 5l-6 18" stroke="#d98c36" strokeWidth="2.2" /><path d="M17 0l6 2-2 5-4-1z" fill="#c89868" /></svg>
          </AppButton>
          <AppButton $open $active aria-label="CalMAN"><CmLogo size={24} /></AppButton>
        </Apps>
        <Tray>
          <TrayButton aria-label="Show hidden icons"><svg width="13" height="8" {...line} strokeWidth="1.4"><path d="M1 7l5.5-5.5L12 7" /></svg></TrayButton>
          <TrayButton aria-label="Battery"><svg width="17" height="13" {...line} strokeWidth="1.2"><path d="M5 3.5h10.500v8H4.500V8M16.500 6v3M1 4h4v2c0 2-4 2-4 0zM2 1v3M4 1v3M3 7v4" /><path d="M7 5.5h7v4H7z" fill="#fff" /></svg></TrayButton>
          <TrayButton aria-label="Network"><svg width="14" height="14" {...line} strokeWidth="1.4"><path d="M1 12C1 6 6 1 12 1M4 12.5c0-4.500 3.500-8 8-8M7 12.500c0-3 2-5 5-5" /><circle cx="11" cy="11.5" r="1.6" fill="#fff" /></svg></TrayButton>
          <TrayButton aria-label="Volume muted"><svg width="15" height="13" {...line} strokeWidth="1.2"><path d="M1 4.5h2L6.500 1v11L3 8.500H1zM9.500 4l4.500 5M14 4l-4.500 5" /></svg></TrayButton>
          <TrayButton aria-label="Notifications"><svg width="17" height="17" {...line} strokeWidth="1.3"><path d="M1 1.5h15v11h-5l-2.500 3-2.500-3H1zM4 4.500h9M4 7h9M4 9.500h6" /></svg></TrayButton>
          <Clock>18:37<br />05.01.2017</Clock>
        </Tray>
      </Taskbar>
    </Window>
  );
}
